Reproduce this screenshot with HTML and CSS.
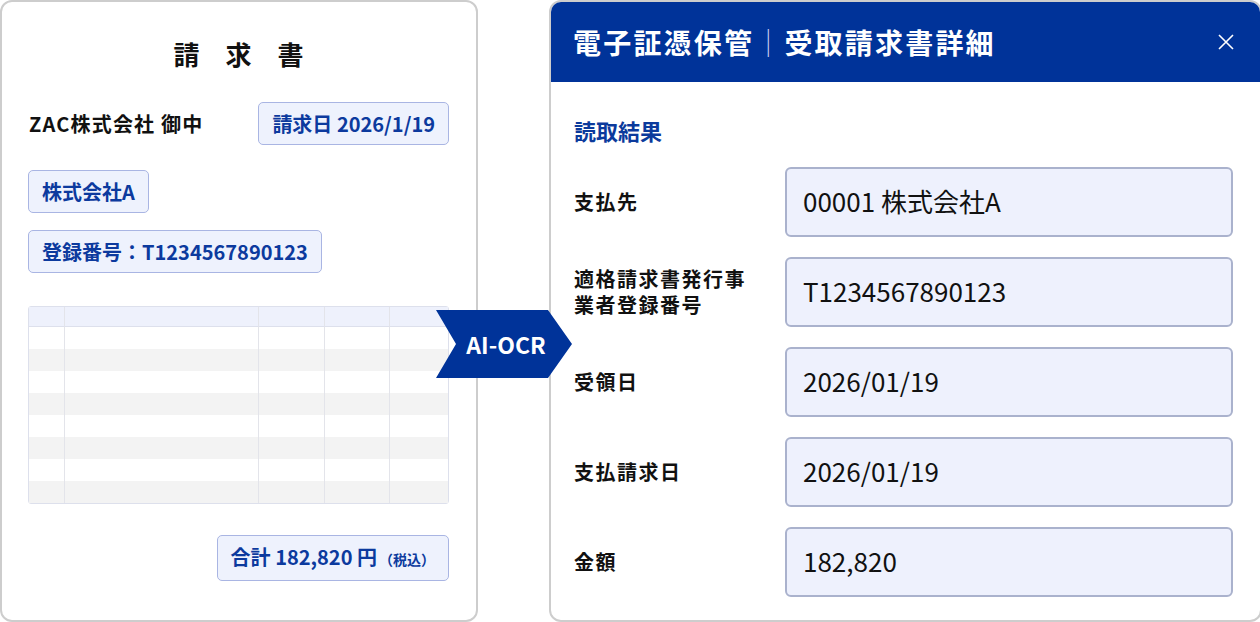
FILE: index.html
```html
<!DOCTYPE html>
<html lang="ja">
<head>
    <meta charset="UTF-8">
    <meta name="viewport" content="width=device-width, initial-scale=1.0">
    <title>受取請求書詳細</title>
    <link rel="stylesheet" href="styles.css">
</head>
<body>
    <div class="stage">
        <!-- 紙の請求書 -->
        <section class="invoice">
            <h1 class="invoice-title">請　求　書</h1>

            <div class="to-row">
                <span class="atena">ZAC株式会社 御中</span>
                <span class="tag">請求日 2026/1/19</span>
            </div>

            <span class="tag company">株式会社A</span>
            <span class="tag regno">登録番号：T1234567890123</span>

            <table class="meisai">
                <tr><th></th><th></th><th></th><th></th><th></th></tr>
                <tr><td></td><td></td><td></td><td></td><td></td></tr>
                <tr><td></td><td></td><td></td><td></td><td></td></tr>
                <tr><td></td><td></td><td></td><td></td><td></td></tr>
                <tr><td></td><td></td><td></td><td></td><td></td></tr>
                <tr><td></td><td></td><td></td><td></td><td></td></tr>
                <tr><td></td><td></td><td></td><td></td><td></td></tr>
                <tr><td></td><td></td><td></td><td></td><td></td></tr>
                <tr><td></td><td></td><td></td><td></td><td></td></tr>
            </table>

            <span class="tag total">合計 182,820 円<small>（税込）</small></span>
        </section>

        <!-- 読取結果の画面 -->
        <section class="detail">
            <header class="detail-head">
                <h2>電子証憑保管<span class="sep">｜</span>受取請求書詳細</h2>
                <svg class="close" width="16" height="16" viewBox="0 0 16 16">
                    <path d="M1 1L15 15M15 1L1 15" stroke="#fff" stroke-width="1.6" fill="none"/>
                </svg>
            </header>

            <div class="detail-body">
                <h3 class="section-title">読取結果</h3>

                <div class="fields">
                    <div class="field-label">支払先</div>
                    <div class="field-value">00001 株式会社A</div>

                    <div class="field-label">適格請求書発行事業者登録番号</div>
                    <div class="field-value">T1234567890123</div>

                    <div class="field-label">受領日</div>
                    <div class="field-value">2026/01/19</div>

                    <div class="field-label">支払請求日</div>
                    <div class="field-value">2026/01/19</div>

                    <div class="field-label">金額</div>
                    <div class="field-value">182,820</div>
                </div>
            </div>
        </section>

        <div class="ocr-arrow">
            <svg width="136" height="68" viewBox="0 0 136 68">
                <polygon points="0,0 112,0 136,34 112,68 0,68 20,34" fill="#003399"/>
            </svg>
            <span>AI-OCR</span>
        </div>
    </div>
</body>
</html>
```

FILE: styles.css
```css
* {
    box-sizing: border-box;
}

body {
    margin: 0;
    background: #fff;
    font-family: "Noto Sans CJK JP", "Noto Sans", sans-serif;
    color: #111;
}

.stage {
    position: relative;
    width: 1260px;
    height: 622px;
    display: flex;
    justify-content: space-between;
    overflow: hidden;
}

/* 左側：請求書 */
.invoice {
    width: 478px;
    height: 622px;
    border: 2px solid #cdcdcd;
    border-radius: 12px;
    padding: 34px 27px 0 26px;
    display: flex;
    flex-direction: column;
    align-items: flex-start;
}

.invoice-title {
    margin: 0;
    width: 100%;
    text-align: center;
    font-size: 26px;
    font-weight: 700;
    line-height: 36px;
}

.to-row {
    width: 100%;
    margin-top: 30px;
    display: flex;
    justify-content: space-between;
    align-items: center;
}

.atena {
    font-size: 20px;
    font-weight: 700;
    letter-spacing: 1.2px;
    padding-left: 1px;
}

.tag {
    display: inline-block;
    border: 1px solid #a9b5e3;
    background: #eef2fd;
    border-radius: 5px;
    color: #0c3a9e;
    font-size: 20px;
    font-weight: 700;
    line-height: 25px;
    padding: 8px 13px;
    white-space: nowrap;
}

.tag.company {
    margin-top: 25px;
}

.tag.regno {
    margin-top: 17px;
}

.tag.total {
    margin-top: 31px;
    align-self: flex-end;
}

.tag.total small {
    font-size: 14px;
    margin-left: 2px;
}

.meisai {
    width: 100%;
    margin-top: 33px;
    border-collapse: separate;
    border-spacing: 0;
    border: 1px solid #dde0ec;
    border-radius: 3px;
    table-layout: fixed;
}

.meisai th,
.meisai td {
    padding: 0;
    height: 22px;
    border-left: 1px solid #e3e4ea;
}

.meisai th:first-child,
.meisai td:first-child {
    border-left: none;
    width: 35px;
}

.meisai th:nth-child(2) {
    width: 194px;
}

.meisai th:nth-child(3) {
    width: 66px;
}

.meisai th:nth-child(4) {
    width: 65px;
}

.meisai th {
    height: 20px;
    background: #eef1fc;
    border-bottom: 1px solid #dde0ec;
}

.meisai tr:nth-child(odd) td {
    background: #f3f3f3;
}

/* 右側：読取結果 */
.detail {
    width: 713px;
    height: 622px;
    margin-right: -2px;
    border: 2px solid #cdcdcd;
    border-radius: 12px;
    overflow: hidden;
}

.detail-head {
    height: 80px;
    background: #003399;
    color: #fff;
    display: flex;
    align-items: center;
    justify-content: space-between;
    padding: 0 26px 0 22px;
}

.detail-head h2 {
    margin: 0;
    font-size: 28px;
    font-weight: 700;
    letter-spacing: 2.2px;
}

.detail-head .sep {
    font-weight: 300;
    color: #c7d1ee;
}

.detail-body {
    padding: 32px 27px 0 23px;
}

.section-title {
    margin: 0;
    font-size: 22px;
    line-height: 33px;
    font-weight: 700;
    color: #0b3a9c;
}

.fields {
    margin-top: 20px;
    display: grid;
    grid-template-columns: 211px 1fr;
    row-gap: 20px;
}

.field-label {
    align-self: center;
    font-size: 20px;
    font-weight: 700;
    letter-spacing: 1.5px;
    line-height: 26px;
    padding-right: 28px;
}

.field-value {
    height: 70px;
    border: 2px solid #aab2cd;
    background: #eef1fd;
    border-radius: 6px;
    padding: 0 16px 3px;
    display: flex;
    align-items: center;
    font-size: 26px;
}

/* 中央の矢印 */
.ocr-arrow {
    position: absolute;
    left: 436px;
    top: 310px;
    width: 136px;
    height: 68px;
}

.ocr-arrow svg {
    display: block;
}

.ocr-arrow span {
    position: absolute;
    top: 0;
    bottom: 0;
    left: 4px;
    right: 0;
    display: flex;
    align-items: center;
    justify-content: center;
    color: #fff;
    font-size: 23px;
    font-weight: 700;
}
```
